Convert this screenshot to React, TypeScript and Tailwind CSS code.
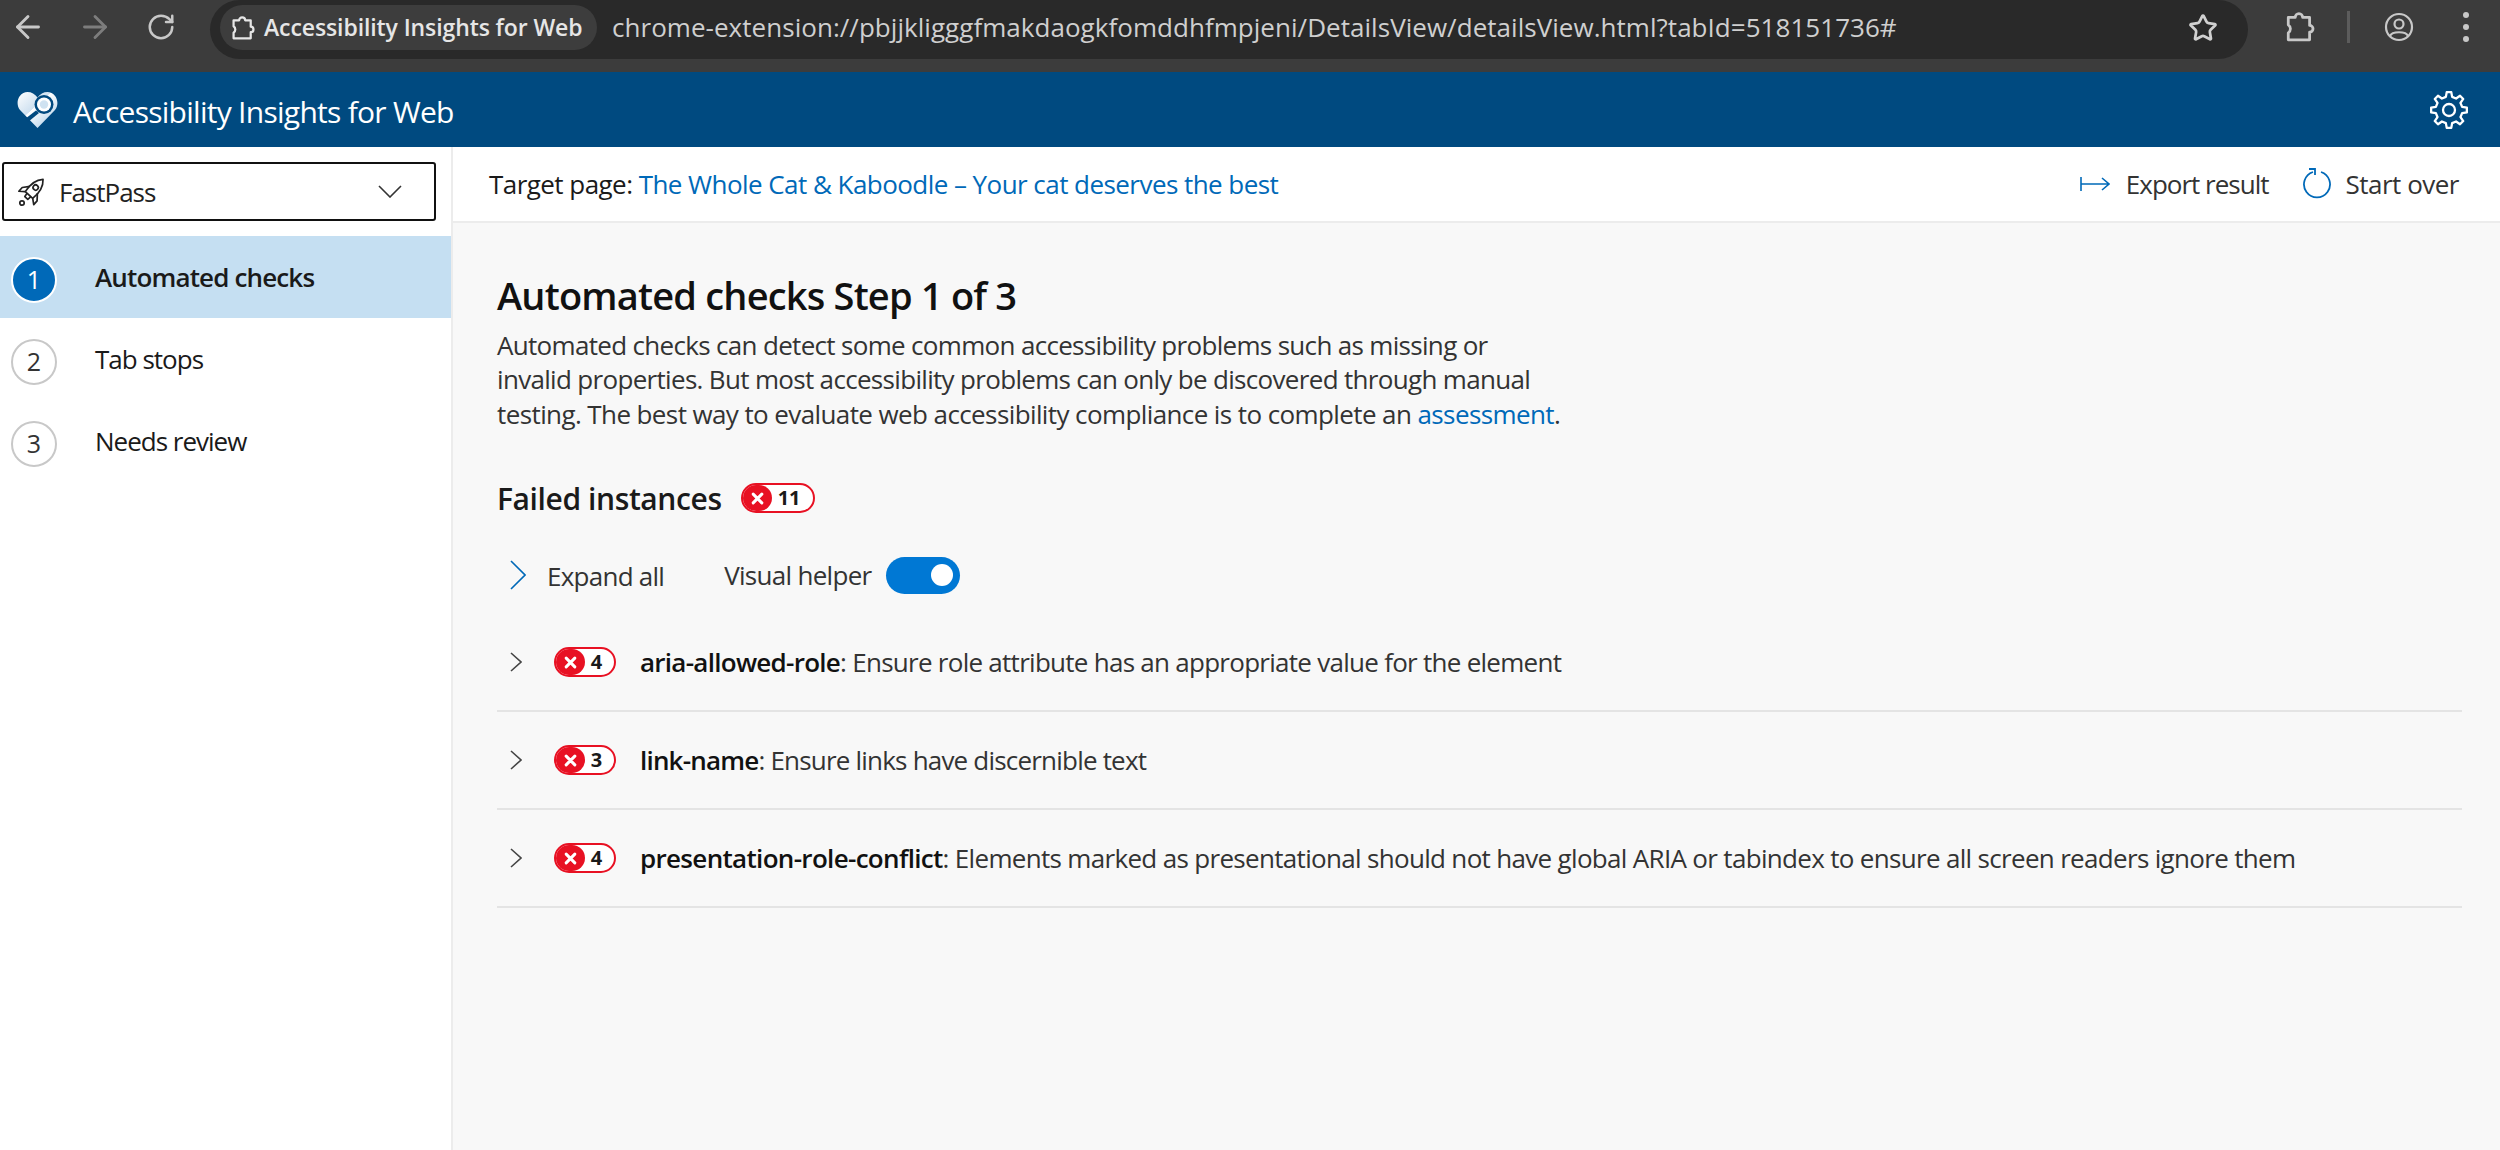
import React from "react";
import { ArrowLeft, ArrowRight, RotateCw, Star } from "lucide-react";

const font = { fontFamily: '"Open Sans", "Noto Sans", sans-serif' };

function Puzzle({ className }: { className?: string }) {
  return (
    <svg viewBox="0 0 28 30" className={className} fill="none" stroke="currentColor" strokeWidth="2.6" strokeLinejoin="round">
      <path d="M3 6h6.5a3.5 3.5 0 0 1 7 0H23v7.5a3.2 3.2 0 0 1 0 6.4V27H3v-6.5a4.5 4.5 0 0 0 0-7.5z" />
    </svg>
  );
}

function Logo() {
  return (
    <svg viewBox="0 0 41 36" className="w-[41px] h-[36px] shrink-0">
      <defs>
        <linearGradient id="h" x1="0" y1="0" x2="1" y2="1">
          <stop offset="0" stopColor="#ffffff" />
          <stop offset="0.42" stopColor="#cfe1f0" />
          <stop offset="0.43" stopColor="#ffffff" />
          <stop offset="1" stopColor="#9fc5e3" />
        </linearGradient>
      </defs>
      <path d="M20.5 36 L3 18 C-2.5 11 2 0 10.5 0 C14.5 0 18 2 20.5 5.5 C23 2 26.5 0 30.5 0 C39 0 43.5 11 38 18 Z" fill="url(#h)" />
      <path d="M19 18.5 L8 27 L11 30 L22 21 Z" fill="#00497f" />
      <circle cx="27" cy="12.5" r="9.5" fill="#00497f" />
      <circle cx="27" cy="12.5" r="7" fill="#ffffff" />
      <circle cx="27" cy="12.5" r="4.2" fill="#cfe2f1" />
    </svg>
  );
}

function gearPath() {
  const cx = 19, cy = 19, ro = 18, ri = 13.5, n = 8;
  const step = (Math.PI * 2) / n;
  let d = "";
  for (let i = 0; i < n; i++) {
    const a = i * step - Math.PI / 2;
    const pts: [number, number][] = [
      [ri, a - step * 0.3],
      [ro, a - step * 0.16],
      [ro, a + step * 0.16],
      [ri, a + step * 0.3],
    ];
    pts.forEach(([r, t], j) => {
      const x = (cx + r * Math.cos(t)).toFixed(2);
      const y = (cy + r * Math.sin(t)).toFixed(2);
      d += `${i === 0 && j === 0 ? "M" : "L"}${x} ${y} `;
    });
  }
  return d + "Z";
}

function Gear() {
  return (
    <svg viewBox="0 0 38 38" className="w-[38px] h-[38px] shrink-0" fill="none" stroke="white" strokeWidth="2.3" strokeLinejoin="round">
      <path d={gearPath()} />
      <circle cx="19" cy="19" r="6" />
    </svg>
  );
}

function RocketIcon() {
  return (
    <svg viewBox="0 0 30 30" className="w-[30px] h-[30px] shrink-0" fill="none" stroke="#222" strokeWidth="1.7" strokeLinejoin="round">
      <g transform="translate(15 13.5) rotate(42)">
        <path d="M0 -15 C5 -10 6.5 -3 5 6 H-5 C-6.5 -3 -5 -10 0 -15Z" />
        <circle cx="0" cy="-4" r="2.6" />
        <path d="M-5 -1 L-10 5 L-10 10 L-5 6" />
        <path d="M5 -1 L10 5 L10 10 L5 6" />
        <path d="M-2.5 6 L-2 10 H2 L2.5 6" />
      </g>
      <circle cx="4" cy="26" r="2.2" />
    </svg>
  );
}

function Chevron({ w, h, color, sw }: { w: number; h: number; color: string; sw: number }) {
  return (
    <svg width={w} height={h} viewBox={`0 0 ${w} ${h}`} className="shrink-0" fill="none" stroke={color} strokeWidth={sw}>
      <path d={`M1 1 L${w - 1} ${h / 2} L1 ${h - 1}`} />
    </svg>
  );
}

function Badge({ n, big }: { n: string; big?: boolean }) {
  return (
    <span className={`inline-flex items-center rounded-full border-2 border-[#e81123] h-[30px] ${big ? "w-[74px]" : "w-[62px]"} bg-white overflow-hidden shrink-0`}>
      <span className="flex items-center justify-center bg-[#e81123] rounded-r-full h-full w-[29px] shrink-0">
        <svg viewBox="0 0 12 12" className="w-[13px] h-[13px]" stroke="white" strokeWidth="2.8" strokeLinecap="round">
          <path d="M2 2l8 8M10 2l-8 8" />
        </svg>
      </span>
      <span className="flex-1 text-center text-[20px] font-bold leading-none text-[#1a1a1a] pr-[6px]">{n}</span>
    </span>
  );
}

function Step({ n, label, active }: { n: number; label: string; active?: boolean }) {
  return (
    <div className={`flex items-center h-[82px] pl-[11px] ${active ? "bg-[#c5dff2]" : ""}`}>
      <span className={`flex items-center justify-center mt-[5px] w-[46px] h-[46px] rounded-full text-[25px] shrink-0 ${active ? "bg-[#0069b8] border-2 border-white text-white" : "bg-white border-2 border-[#c8c8c8] text-[#333]"}`}>
        {n}
      </span>
      <span className={`ml-[38px] pt-[1px] text-[26px] text-[#1a1a1a] ${active ? "font-semibold tracking-[-0.85px]" : "tracking-[-1px]"}`}>{label}</span>
    </div>
  );
}

function Rule({ name, desc, n, tracking }: { name: string; desc: string; n: string; tracking: string }) {
  return (
    <div className="flex items-center h-[98px] border-b-2 border-[#e4e4e4] pl-[13px]">
      <Chevron w={12} h={20} color="#444" sw={1.6} />
      <span className="ml-[32px]"><Badge n={n} /></span>
      <p className={`ml-[24px] text-[26px] ${tracking} text-[#333] whitespace-nowrap`}>
        <span className="font-semibold text-[#111]">{name}</span>: {desc}
      </p>
    </div>
  );
}

export default function App() {
  return (
    <div style={font} className="w-[2500px] h-[1150px] flex flex-col overflow-hidden bg-white">
      <div className="h-[72px] bg-[#3c3c3c] flex items-start shrink-0 text-[#c8c8c8]">
        <div className="flex items-center h-[54px] w-[210px] pl-[10px] pr-[0px]">
          <ArrowLeft className="w-[36px] h-[36px]" strokeWidth={1.9} />
          <ArrowRight className="ml-[31px] w-[36px] h-[36px] text-[#7d7d7d]" strokeWidth={1.9} />
          <RotateCw className="ml-[33px] w-[30px] h-[30px]" strokeWidth={2} />
        </div>
        <div className="flex items-center w-[2038px] h-[59px] rounded-full bg-[#292929] pl-[10px] pr-[30px] pb-[4px]">
          <div className="flex items-center h-[45px] w-[377px] rounded-full bg-[#3d3d3d] pl-[11px] text-[#e6e6e6]">
            <Puzzle className="w-[24px] h-[26px] shrink-0" />
            <span className="ml-[9px] text-[23px] font-semibold tracking-[-0.1px] whitespace-nowrap">Accessibility Insights for Web</span>
          </div>
          <span className="ml-[15px] text-[26px] tracking-[0.04px] text-[#cfcfcf] whitespace-nowrap">chrome-extension://pbjjkligggfmakdaogkfomddhfmpjeni/DetailsView/detailsView.html?tabId=518151736#</span>
          <Star className="ml-auto w-[30px] h-[30px] text-[#d0d0d0]" strokeWidth={2.2} />
        </div>
        <div className="flex items-center h-[54px] flex-1 pl-[37px] text-[#c8c8c8]">
          <Puzzle className="w-[30px] h-[32px]" />
          <span className="ml-[32px] w-[3px] h-[32px] bg-[#5c5c5c]" />
          <svg viewBox="0 0 30 30" className="ml-[34px] w-[30px] h-[30px]" fill="none" stroke="currentColor" strokeWidth="2.2">
            <circle cx="15" cy="15" r="13" />
            <circle cx="15" cy="12" r="4.5" />
            <path d="M6 24c2-5 16-5 18 0" />
          </svg>
          <div className="ml-[49px] flex flex-col gap-[6px]">
            <span className="w-[6px] h-[6px] rounded-full bg-current" />
            <span className="w-[6px] h-[6px] rounded-full bg-current" />
            <span className="w-[6px] h-[6px] rounded-full bg-current" />
          </div>
        </div>
      </div>

      <header className="h-[75px] bg-[#004a80] flex items-center pl-[17px] pr-[32px] shrink-0">
        <Logo />
        <span className="ml-[15px] pt-[3px] text-white text-[30px] tracking-[-0.73px] whitespace-nowrap">Accessibility Insights for Web</span>
        <span className="ml-auto"><Gear /></span>
      </header>

      <div className="flex flex-1 min-h-0">
        <aside className="w-[453px] shrink-0 border-r-2 border-[#ececec] bg-white">
          <div className="pl-[2px] pt-[15px] pb-[15px]">
            <div className="flex items-center h-[59px] w-[434px] rounded-[3px] border-2 border-[#111] pl-[14px] pr-[32px]">
              <RocketIcon />
              <span className="ml-[11px] pt-[1px] text-[26px] tracking-[-1px] text-[#222]">FastPass</span>
              <svg width="24" height="13" viewBox="0 0 24 13" className="ml-auto" fill="none" stroke="#333" strokeWidth="1.6">
                <path d="M1 1 L12 12 L23 1" />
              </svg>
            </div>
          </div>
          <Step n={1} label="Automated checks" active />
          <Step n={2} label="Tab stops" />
          <Step n={3} label="Needs review" />
        </aside>

        <div className="flex-1 min-w-0 flex flex-col bg-[#f8f8f8]">
          <div className="h-[76px] bg-white border-b-2 border-[#ececec] flex items-center pl-[36px] pr-[41px] shrink-0">
            <span className="pt-[1px] text-[26px] tracking-[-0.55px] text-[#1a1a1a] whitespace-nowrap">
              Target page: <span className="text-[#0069b8]">The Whole Cat &amp; Kaboodle – Your cat deserves the best</span>
            </span>
            <svg viewBox="0 0 30 16" className="ml-auto w-[30px] h-[16px] shrink-0" fill="none" stroke="#0069b8" strokeWidth="1.6">
              <path d="M1 1v14M1 8h28M22 2l7 6-7 6" />
            </svg>
            <span className="ml-[16px] pt-[1px] text-[26px] tracking-[-1px] text-[#333] whitespace-nowrap">Export result</span>
            <svg viewBox="0 0 30 32" className="ml-[32px] w-[30px] h-[32px] shrink-0" fill="none" stroke="#0069b8" strokeWidth="1.8">
              <path d="M20 4a13 13 0 1 1-8 0M8 1h6v6" />
            </svg>
            <span className="ml-[15px] pt-[1px] text-[26px] tracking-[-0.5px] text-[#333] whitespace-nowrap">Start over</span>
          </div>

          <main className="pl-[44px] pr-[38px] pt-[47px]">
            <h1 className="text-[38px] leading-[50px] font-semibold tracking-[-0.8px] text-[#111]">Automated checks Step 1 of 3</h1>
            <p className="mt-[8px] whitespace-nowrap text-[26px] leading-[34.4px] tracking-[-0.68px] text-[#333]">
              Automated checks can detect some common accessibility problems such as missing or<br />
              invalid properties. But most accessibility problems can only be discovered through manual<br />
              <span className="tracking-[-0.6px]">testing. The best way to evaluate web accessibility compliance is to complete an <span className="text-[#0069b8]">assessment</span>.</span>
            </p>
            <div className="flex items-center mt-[47px] h-[40px]">
              <h2 className="text-[30px] font-semibold tracking-[-0.4px] text-[#1a1a1a] whitespace-nowrap">Failed instances</h2>
              <span className="ml-[19px]"><Badge n="11" big /></span>
            </div>
            <div className="flex items-center mt-[35px] h-[44px] pl-[13px]">
              <Chevron w={16} h={30} color="#0069b8" sw={1.6} />
              <span className="ml-[21px] pt-[2px] text-[26px] tracking-[-0.74px] text-[#333] whitespace-nowrap">Expand all</span>
              <span className="ml-[60px] text-[26px] tracking-[-0.7px] text-[#333] whitespace-nowrap">Visual helper</span>
              <span className="ml-[14px] flex items-center justify-end w-[74px] h-[37px] rounded-full bg-[#0078d4] pr-[7px]">
                <span className="w-[22px] h-[22px] rounded-full bg-white" />
              </span>
            </div>
            <div className="mt-[17px]">
              <Rule name="aria-allowed-role" desc="Ensure role attribute has an appropriate value for the element" n="4" tracking="tracking-[-0.73px]" />
              <Rule name="link-name" desc="Ensure links have discernible text" n="3" tracking="tracking-[-0.8px]" />
              <Rule name="presentation-role-conflict" desc="Elements marked as presentational should not have global ARIA or tabindex to ensure all screen readers ignore them" n="4" tracking="tracking-[-0.68px]" />
            </div>
          </main>
        </div>
      </div>
    </div>
  );
}
